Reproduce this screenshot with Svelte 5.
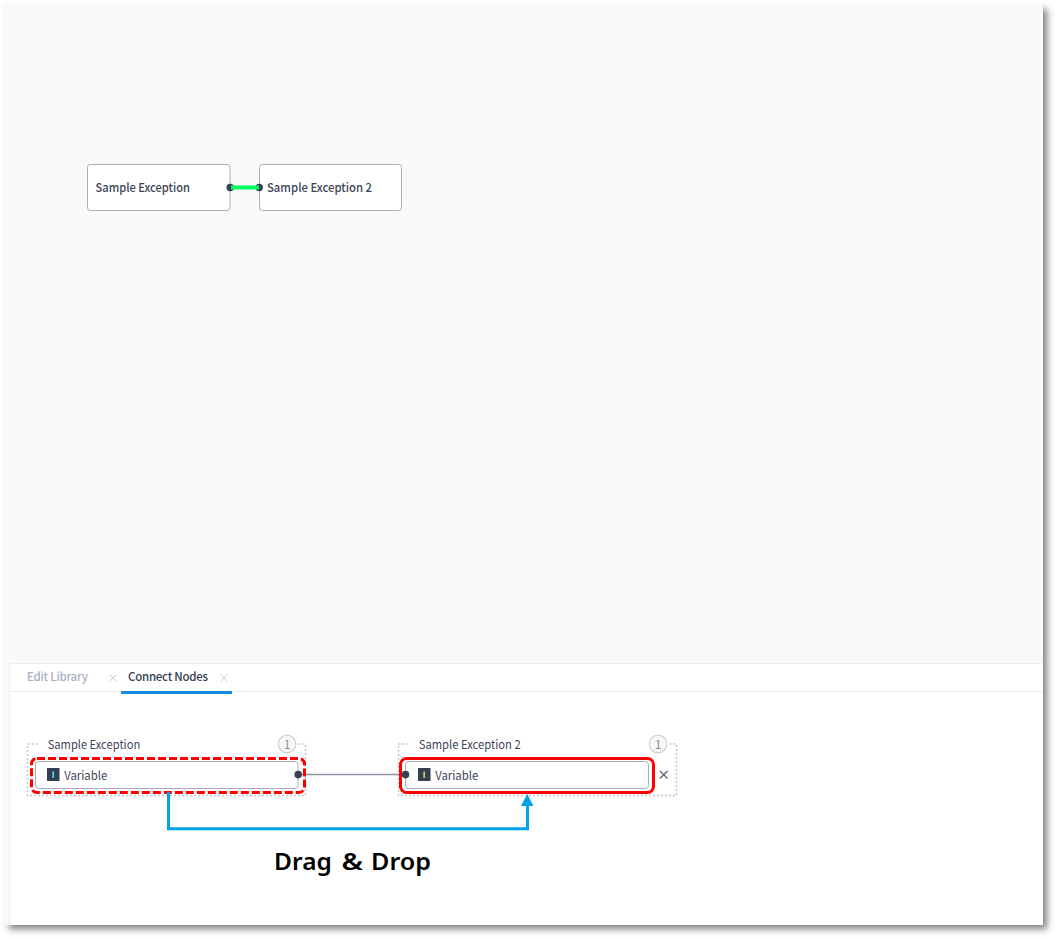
<script>
  const nodes = [
    { x: 87.5, w: 142.5, label: 'Sample Exception', tx: 95.5, len: 94.5 },
    { x: 259.5, w: 142, label: 'Sample Exception 2', tx: 267, len: 105 }
  ];
  const tabs = [
    { name: 'Edit Library', active: false },
    { name: 'Connect Nodes', active: true }
  ];
  const groups = [
    { x: 27.5, right: 305.5, label: 'Sample Exception', len: 92.5, inner: 35.5, innerW: 262.5, badge: 287, stroke: '#42dce0' },
    { x: 398.5, right: 676.5, label: 'Sample Exception 2', len: 102, inner: 405.5, innerW: 243, badge: 658, stroke: '#c8c557' }
  ];
  const caption = [
    { word: 'Drag', x: 274.1, len: 57.7 },
    { word: '&', x: 341.5, len: 21.5 },
    { word: 'Drop', x: 371, len: 60 }
  ];
</script>

<main class="window">
  <section class="canvas">
    <svg width="1040" height="660" viewBox="3 3 1040 660">
      {#each nodes as n}
        <rect x={n.x} y="164.5" width={n.w} height="46" rx="3" fill="#fff" stroke="#abafba" />
        <text class="node" x={n.tx} y="192.3" textLength={n.len} lengthAdjust="spacingAndGlyphs">{n.label}</text>
      {/each}
      <circle cx="230.2" cy="187.5" r="3.7" fill="#364153" />
      <circle cx="259.2" cy="187.5" r="3.7" fill="#364153" />
      <path d="M231 187.5H259" stroke="#00ff5f" stroke-width="4" />
    </svg>
  </section>

  <section class="panel">
    <nav class="tabs">
      {#each tabs as tab}
        <div class="tab" class:active={tab.active}>
          <span>{tab.name}</span>
          <svg width="8" height="8" viewBox="0 0 8 8"><path d="M.7.7 7.3 7.3M7.3.7.7 7.3" stroke="#c9ccd2" fill="none" /></svg>
        </div>
      {/each}
    </nav>
    <svg class="flow" width="1033" height="233" viewBox="10 692 1033 233">
      {#each groups as g}
        <path class="dots" d="M{g.x + 10} 744H{g.x}V795.5H{g.right}V744H{g.badge + 11}" />
        <text class="label" x={g.x + 20.2} y="749" textLength={g.len} lengthAdjust="spacingAndGlyphs">{g.label}</text>
        <circle cx={g.badge} cy="744" r="8.8" fill="#f7f7f7" stroke="#d2d2d2" stroke-width="1.2" />
        <text class="count" x={g.badge} y="748.6" text-anchor="middle">1</text>
        <rect x={g.inner} y="761.5" width={g.innerW} height="27" rx="3" fill="#fff" stroke="#a9adb8" />
        <rect x={g.x + 19.5} y="768" width="12.5" height="13" fill="#344052" />
        <path d="M{g.x + 25.7} 771.5V778" stroke={g.stroke} stroke-width="1.8" />
        <text class="label" x={g.x + 36.7} y="779.7" textLength="43" lengthAdjust="spacingAndGlyphs">Variable</text>
      {/each}
      <path d="M298 774.5H406" stroke="#8e949e" stroke-width="1.5" />
      <rect x="31.5" y="758.5" width="273" height="34" rx="5.5" fill="none" stroke="#f00" stroke-width="3" stroke-dasharray="8 3" />
      <rect x="400.5" y="758.5" width="253" height="34" rx="6" fill="none" stroke="#f00" stroke-width="3" />
      <circle cx="298.2" cy="774.6" r="3.8" fill="#364153" />
      <circle cx="405.5" cy="774.6" r="3.8" fill="#364153" />
      <path d="M660 771 667.5 778.5M667.5 771 660 778.5" stroke="#566071" stroke-width="1.2" />
      <path d="M168.5 792V828.7H527.5V804" fill="none" stroke="#00a2e8" stroke-width="3" />
      <path d="M527.3 794 533.5 806H521Z" fill="#00a2e8" />
      {#each caption as c}
        <text class="caption" x={c.x} y="870" textLength={c.len} lengthAdjust="spacingAndGlyphs">{c.word}</text>
      {/each}
    </svg>
  </section>
</main>

<style>
  :global(body) { background: #fff; }
  :global(#app) { display: flow-root; box-sizing: border-box; height: 938px; overflow: hidden; }
  .window {
    box-sizing: border-box;
    width: 1040px;
    height: 922px;
    margin: 3px 0 0 3px;
    background: #f9f9f9;
    box-shadow: 5px 5px 7px -1px rgba(0, 0, 0, .5);
    font-family: "Noto Sans CJK KR", "Noto Sans", sans-serif;
  }
  .canvas { height: 660px; }
  svg { display: block; }
  .panel {
    box-sizing: border-box;
    height: 262px;
    margin-left: 6px;
    background: #fff;
    border-top: 1px solid #eee;
    border-left: 1px solid #eee;
  }
  .tabs {
    display: flex;
    box-sizing: border-box;
    height: 28px;
    padding-left: 10px;
    border-bottom: 1px solid #e9ebee;
  }
  .tab {
    display: flex;
    box-sizing: border-box;
    width: 101px;
    height: 30px;
    padding: 0 4px 3px 7px;
    align-items: center;
    justify-content: space-between;
    font-size: 11.5px;
    letter-spacing: -.25px;
    font-weight: 500;
    color: #a8b1bf;
    white-space: nowrap;
    z-index: 1;
  }
  .tab span { padding-bottom: 4px; }
  .tab.active {
    width: 111px;
    color: #343e50;
    border-bottom: 3px solid #168de2;
    padding-bottom: 0;
  }
  .node { font-size: 12px; font-weight: 500; fill: #3d4658; }
  .label { font-size: 12px; fill: #3d4658; }
  .count { font-size: 12px; fill: #858d99; }
  .dots { fill: none; stroke: #c4c6cb; stroke-width: 1.5; stroke-dasharray: 2 2; }
  .caption { font-family: "Noto Sans", "Open Sans", sans-serif; font-size: 24px; font-weight: 600; fill: #000; }
</style>
